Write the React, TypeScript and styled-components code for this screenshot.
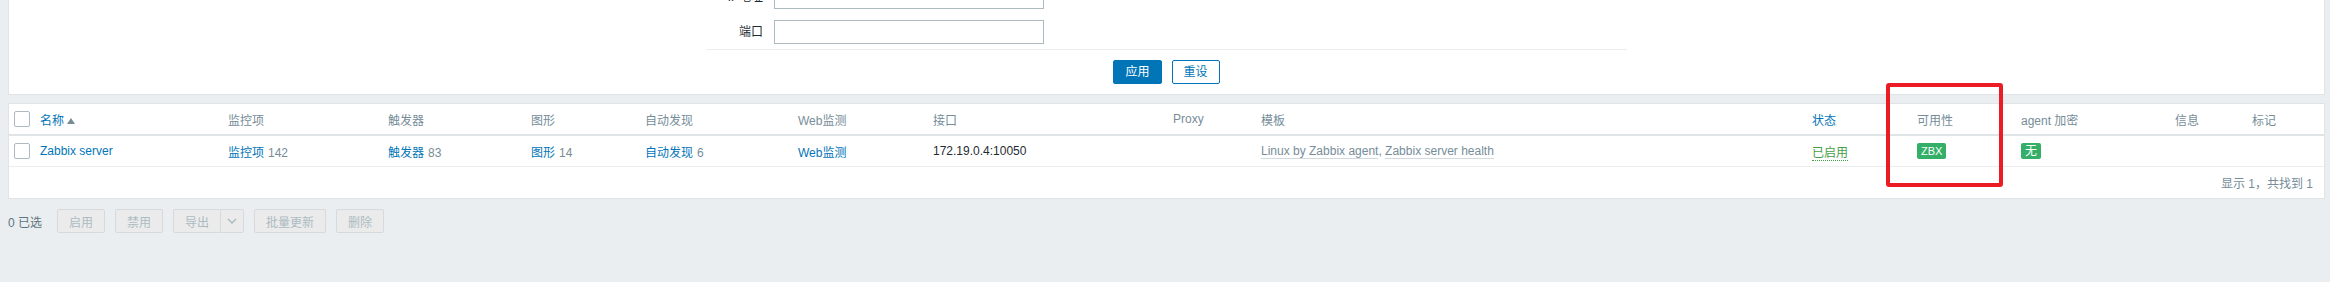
import React from 'react';
import styled, { createGlobalStyle } from 'styled-components';

const GlobalStyle = createGlobalStyle`
  html, body {
    margin: 0;
    padding: 0;
    background: #ebeef0;
    overflow: hidden;
  }
  body {
    font-family: "Liberation Sans", "Noto Sans CJK SC", sans-serif;
    font-size: 12px;
    color: #1f2c33;
  }
`;

const Page = styled.div`
  position: relative;
  width: 2330px;
  height: 282px;
  padding: 0 5px 0 8px;
  box-sizing: border-box;
  overflow: hidden;
`;

const Panel = styled.div`
  background: #fff;
  border: 1px solid #dfe4e7;
`;

const FilterPanel = styled(Panel)`
  margin-top: -26px;
  padding: 10px 0;
  display: flex;
  justify-content: center;
`;

const FilterForm = styled.div`
  width: 921px;
  display: flex;
  flex-direction: column;
`;

const FieldGrid = styled.div`
  display: grid;
  grid-template-columns: 57px 270px;
  column-gap: 11px;
  row-gap: 11px;
  align-items: center;
  margin-bottom: 5px;
`;

const FieldLabel = styled.label`
  justify-self: end;
  color: #1f2c33;
  line-height: 14px;
`;

const TextInput = styled.div`
  height: 24px;
  box-sizing: border-box;
  border: 1px solid #acbbc2;
  background: #fff;
`;

const ButtonRow = styled.div`
  border-top: 1px solid #ebeef0;
  padding-top: 10px;
  display: flex;
  justify-content: center;
  gap: 10px;
`;

const Button = styled.button<{ $primary?: boolean }>`
  height: 24px;
  padding: 0 11px;
  box-sizing: border-box;
  border-radius: 2px;
  font: inherit;
  line-height: 22px;
  border: 1px solid #0275b8;
  background: ${(p) => (p.$primary ? '#0275b8' : '#fff')};
  color: ${(p) => (p.$primary ? '#fff' : '#0275b8')};
`;

const TablePanel = styled(Panel)`
  margin-top: 8px;
`;

const Table = styled.table`
  width: 2315px;
  table-layout: fixed;
  border-collapse: separate;
  border-spacing: 0;
`;

const Th = styled.th<{ $sort?: boolean }>`
  height: 30px;
  padding: 0 5px;
  text-align: left;
  font-weight: normal;
  white-space: nowrap;
  color: ${(p) => (p.$sort ? '#0275b8' : '#768d99')};
  border-bottom: 2px solid #dfe4e7;
  vertical-align: middle;
`;

const Td = styled.td<{ $muted?: boolean }>`
  height: 30px;
  padding: 0 5px;
  white-space: nowrap;
  vertical-align: middle;
  border-bottom: 1px solid #ebeef0;
  color: ${(p) => (p.$muted ? '#768d99' : '#1f2c33')};
`;

const FooterCell = styled.td`
  height: 31px;
  padding: 0 11px 0 5px;
  text-align: right;
  color: #768d99;
  vertical-align: middle;
`;

const Checkbox = styled.span`
  display: block;
  width: 16px;
  height: 16px;
  box-sizing: border-box;
  border: 1px solid #acbbc2;
  border-radius: 2px;
  background: #fff;
`;

const SortArrow = styled.span`
  display: inline-block;
  width: 0;
  height: 0;
  margin-left: 3px;
  vertical-align: 1px;
  border-left: 4px solid transparent;
  border-right: 4px solid transparent;
  border-bottom: 6px solid #768d99;
`;

const Link = styled.a`
  color: #0275b8;
  text-decoration: none;
`;

const Count = styled.span`
  color: #768d99;
  margin-left: 4px;
`;

const TemplateLink = styled.a`
  color: #768d99;
  text-decoration: none;
  border-bottom: 1px solid #d2dadf;
`;

const StatusLink = styled.a`
  color: #429e47;
  text-decoration: none;
  border-bottom: 1px dotted #429e47;
`;

const Badge = styled.span`
  display: inline-block;
  height: 16px;
  line-height: 16px;
  padding: 0 4px;
  border-radius: 2px;
  background: #34af67;
  color: #fff;
  font-size: ${(p: { $small?: boolean }) => (p.$small ? '11px' : '12px')};
`;

const ActionBar = styled.div`
  margin-top: 10px;
  display: flex;
  align-items: center;
  gap: 10px;
`;

const SelectedCount = styled.span`
  color: #5f7581;
  margin-right: 5px;
`;

const DisabledButton = styled.span`
  height: 24px;
  padding: 0 11px;
  box-sizing: border-box;
  display: flex;
  align-items: center;
  border: 1px solid #d5dadd;
  border-radius: 2px;
  background: #ebebeb;
  color: #acbbc2;
`;

const SplitButton = styled.span`
  display: flex;
  height: 24px;
`;

const SplitMain = styled(DisabledButton)`
  border-radius: 2px 0 0 2px;
`;

const SplitArrow = styled(DisabledButton)`
  padding: 0;
  width: 24px;
  justify-content: center;
  border-left: 1px solid #d5dadd;
  margin-left: -1px;
  border-radius: 0 2px 2px 0;
`;

const Highlight = styled.div`
  position: absolute;
  left: 1886px;
  top: 83px;
  width: 117px;
  height: 104px;
  box-sizing: border-box;
  border: 4px solid #ec1c24;
  border-radius: 3px;
  pointer-events: none;
`;

const columns = [26, 188, 160, 143, 114, 153, 135, 240, 88, 551, 105, 104, 154, 77, 77];

export default function App() {
  return (
    <Page>
      <GlobalStyle />
      <FilterPanel>
        <FilterForm>
          <FieldGrid>
            <FieldLabel>IP地址</FieldLabel>
            <TextInput />
            <FieldLabel>端口</FieldLabel>
            <TextInput />
          </FieldGrid>
          <ButtonRow>
            <Button $primary>应用</Button>
            <Button>重设</Button>
          </ButtonRow>
        </FilterForm>
      </FilterPanel>

      <TablePanel>
        <Table>
          <colgroup>
            {columns.map((w, i) => (
              <col key={i} style={{ width: w }} />
            ))}
          </colgroup>
          <thead>
            <tr>
              <Th><Checkbox /></Th>
              <Th $sort>名称<SortArrow /></Th>
              <Th>监控项</Th>
              <Th>触发器</Th>
              <Th>图形</Th>
              <Th>自动发现</Th>
              <Th>Web监测</Th>
              <Th>接口</Th>
              <Th>Proxy</Th>
              <Th>模板</Th>
              <Th $sort>状态</Th>
              <Th>可用性</Th>
              <Th>agent 加密</Th>
              <Th>信息</Th>
              <Th>标记</Th>
            </tr>
          </thead>
          <tbody>
            <tr>
              <Td><Checkbox /></Td>
              <Td><Link>Zabbix server</Link></Td>
              <Td><Link>监控项</Link><Count>142</Count></Td>
              <Td><Link>触发器</Link><Count>83</Count></Td>
              <Td><Link>图形</Link><Count>14</Count></Td>
              <Td><Link>自动发现</Link><Count>6</Count></Td>
              <Td><Link>Web监测</Link></Td>
              <Td>172.19.0.4:10050</Td>
              <Td />
              <Td $muted>
                <TemplateLink>Linux by Zabbix agent</TemplateLink>,{' '}
                <TemplateLink>Zabbix server health</TemplateLink>
              </Td>
              <Td><StatusLink>已启用</StatusLink></Td>
              <Td><Badge $small>ZBX</Badge></Td>
              <Td><Badge>无</Badge></Td>
              <Td />
              <Td />
            </tr>
            <tr>
              <FooterCell colSpan={15}>显示 1，共找到 1</FooterCell>
            </tr>
          </tbody>
        </Table>
      </TablePanel>

      <ActionBar>
        <SelectedCount>0 已选</SelectedCount>
        <DisabledButton>启用</DisabledButton>
        <DisabledButton>禁用</DisabledButton>
        <SplitButton>
          <SplitMain>导出</SplitMain>
          <SplitArrow>
            <svg width="10" height="6" viewBox="0 0 10 6">
              <path d="M1 1l4 4 4-4" fill="none" stroke="#acbbc2" strokeWidth="1.5" />
            </svg>
          </SplitArrow>
        </SplitButton>
        <DisabledButton>批量更新</DisabledButton>
        <DisabledButton>删除</DisabledButton>
      </ActionBar>

      <Highlight />
    </Page>
  );
}
